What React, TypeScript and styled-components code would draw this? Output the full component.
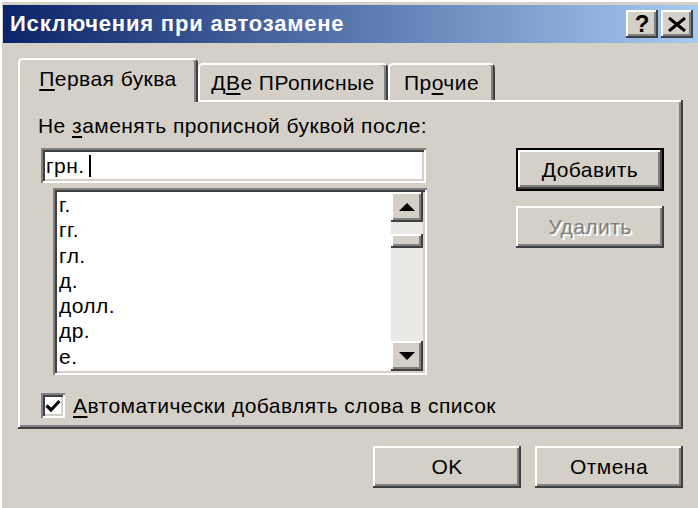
import React from 'react'
import styled, { createGlobalStyle, css } from 'styled-components'

const face = '#d4d0c8'
const shadow = '#808080'
const dark = '#404040'

const raised = css`
    box-shadow: inset -2px -2px ${dark}, inset 2px 2px #ffffff,
        inset -4px -4px ${shadow}, inset 4px 4px ${face};
`
const sunken = css`
    box-shadow: inset 2px 2px ${shadow}, inset -2px -2px #ffffff,
        inset 4px 4px ${dark}, inset -4px -4px ${face};
`

const GlobalStyle = createGlobalStyle`
    body {
        margin: 0;
        background: ${face};
        font-family: "Liberation Sans", Arial, sans-serif;
        font-size: 21px;
        letter-spacing: 0.45px;
        color: #000;
    }
`

const Window = styled.div`
    width: 698px;
    height: 508px;
    box-sizing: border-box;
    padding: 5px 0 0 3px;
    background: ${face};
    box-shadow: inset 2px 2px #ffffff;
    overflow: hidden;
`
const TitleBar = styled.div`
    height: 38px;
    display: flex;
    align-items: center;
    padding-left: 7px;
    background: linear-gradient(to right, #0a246a, #a6caf0);
    color: #fff;
    font-weight: bold;
    font-size: 22px;
    letter-spacing: 0.8px;
`
const TitleButtons = styled.div`
    margin-left: auto;
    margin-right: 5px;
    display: flex;
    gap: 3px;
`
const TitleButton = styled.div`
    width: 32px;
    height: 28px;
    background: ${face};
    ${raised};
    display: flex;
    align-items: center;
    justify-content: center;
    color: #000;
    font-size: 24px;
    font-weight: bold;
    letter-spacing: 0;
`
const Content = styled.div`
    padding: 15px 15px 0 15px;
`
const TabRow = styled.div`
    display: flex;
    align-items: flex-end;
    height: 42px;
`
const Tab = styled.div<{ $active?: boolean; $w: number }>`
    position: relative;
    width: ${p => p.$w}px;
    height: ${p => (p.$active ? 44 : 37)}px;
    margin-bottom: ${p => (p.$active ? -2 : 0)}px;
    z-index: ${p => (p.$active ? 1 : 0)};
    box-sizing: border-box;
    display: flex;
    align-items: center;
    justify-content: center;
    padding-bottom: ${p => (p.$active ? 4 : 0)}px;
    background: ${face};
    border-radius: 5px 5px 0 0;
    border-top: 2px solid #fff;
    border-left: 2px solid #fff;
    border-right: 2px solid ${dark};
    box-shadow: inset -2px 0 ${shadow};
`
const Panel = styled.div`
    width: 665px;
    box-sizing: border-box;
    padding: 14px 15px 11px 20px;
    background: ${face};
    ${raised};
    display: grid;
    grid-template-columns: 389px 148px;
    column-gap: 89px;
    grid-template-rows: auto auto auto auto;
`
const Label = styled.div`
    grid-column: 1;
    line-height: 24px;
    height: 24px;
    white-space: nowrap;
`
const Mn = styled.span`
    text-decoration: underline;
    text-underline-offset: 3px;
`
const Field = styled.div`
    grid-column: 1;
    margin: 10px 0 0 3px;
    width: 385px;
    height: 35px;
    box-sizing: border-box;
    padding: 0 5px;
    background: #fff;
    ${sunken};
    display: flex;
    align-items: center;
`
const Caret = styled.span`
    display: inline-block;
    width: 2px;
    height: 22px;
    margin-left: 4px;
    background: #000;
`
const ListBox = styled.div`
    grid-column: 1;
    margin: 5px 0 0 15px;
    width: 374px;
    height: 187px;
    box-sizing: border-box;
    padding: 4px;
    background: #fff;
    ${sunken};
    display: flex;
`
const Items = styled.div`
    flex: 1;
    padding-left: 2px;
    overflow: hidden;
`
const Item = styled.div`
    line-height: 25.3px;
    white-space: nowrap;
`
const ScrollBar = styled.div`
    width: 32px;
    display: flex;
    flex-direction: column;
`
const ArrowButton = styled.div`
    height: 30px;
    background: ${face};
    ${raised};
    display: flex;
    align-items: center;
    justify-content: center;
`
const Track = styled.div`
    flex: 1;
    padding-top: 12px;
    background: #ebe9e5;
`
const Thumb = styled.div`
    height: 14px;
    background: ${face};
    ${raised};
`
const SideButtons = styled.div`
    grid-column: 2;
    grid-row: 2 / span 2;
    margin-top: 10px;
    display: flex;
    flex-direction: column;
    gap: 15px;
`
const Button = styled.div<{ $default?: boolean; $disabled?: boolean }>`
    width: 148px;
    height: ${p => (p.$default ? 43 : 42)}px;
    box-sizing: border-box;
    display: flex;
    align-items: center;
    justify-content: center;
    background: ${face};
    ${raised};
    ${p =>
        p.$default &&
        css`
            border: 2px solid #000;
        `}
    ${p =>
        p.$disabled &&
        css`
            color: ${shadow};
            text-shadow: 2px 2px #ffffff;
        `}
`
const CheckRow = styled.div`
    grid-column: 1 / span 2;
    margin: 18px 0 0 3px;
    display: flex;
    align-items: center;
    gap: 8px;
`
const CheckBox = styled.div`
    width: 24px;
    height: 25px;
    background: #fff;
    ${sunken};
    display: flex;
    align-items: center;
    justify-content: center;
`
const Footer = styled.div`
    margin-top: 17px;
    display: flex;
    justify-content: flex-end;
    gap: 14px;
`

const Arrow = ({ up }: { up?: boolean }) => (
    <svg width="16" height="8" viewBox="0 0 16 8">
        <path d={up ? 'M0 8 L8 0 L16 8 Z' : 'M0 0 L8 8 L16 0 Z'} fill="#000" />
    </svg>
)

const items = ['г.', 'гг.', 'гл.', 'д.', 'долл.', 'др.', 'е.']

const App = () => {
    return (
        <>
            <GlobalStyle />
            <Window>
                <TitleBar>
                    Исключения при автозамене
                    <TitleButtons>
                        <TitleButton>?</TitleButton>
                        <TitleButton>
                            <svg width="20" height="15" viewBox="0 0 20 15">
                                <path d="M2 1 L18 14 M18 1 L2 14" stroke="#000" strokeWidth="3" />
                            </svg>
                        </TitleButton>
                    </TitleButtons>
                </TitleBar>
                <Content>
                    <TabRow>
                        <Tab $active $w={180}>
                            <span><Mn>П</Mn>ервая буква</span>
                        </Tab>
                        <Tab $w={190}>
                            <span>Д<Mn>В</Mn>е ПРописные</span>
                        </Tab>
                        <Tab $w={107}>
                            <span>Пр<Mn>о</Mn>чие</span>
                        </Tab>
                    </TabRow>
                    <Panel>
                        <Label>
                            Не <Mn>з</Mn>аменять прописной буквой после:
                        </Label>
                        <Field>
                            грн.<Caret />
                        </Field>
                        <SideButtons>
                            <Button $default>
                                <span><Mn>Д</Mn>обавить</span>
                            </Button>
                            <Button $disabled>Удалить</Button>
                        </SideButtons>
                        <ListBox>
                            <Items>
                                {items.map(i => (
                                    <Item key={i}>{i}</Item>
                                ))}
                            </Items>
                            <ScrollBar>
                                <ArrowButton><Arrow up /></ArrowButton>
                                <Track><Thumb /></Track>
                                <ArrowButton><Arrow /></ArrowButton>
                            </ScrollBar>
                        </ListBox>
                        <CheckRow>
                            <CheckBox>
                                <svg width="16" height="14" viewBox="0 0 16 14">
                                    <path d="M1.5 6.5 L6 11 L14.5 2" stroke="#000" strokeWidth="3.2" fill="none" />
                                </svg>
                            </CheckBox>
                            <span><Mn>А</Mn>втоматически добавлять слова в список</span>
                        </CheckRow>
                    </Panel>
                    <Footer>
                        <Button>OK</Button>
                        <Button>Отмена</Button>
                    </Footer>
                </Content>
            </Window>
        </>
    )
}

export default App
